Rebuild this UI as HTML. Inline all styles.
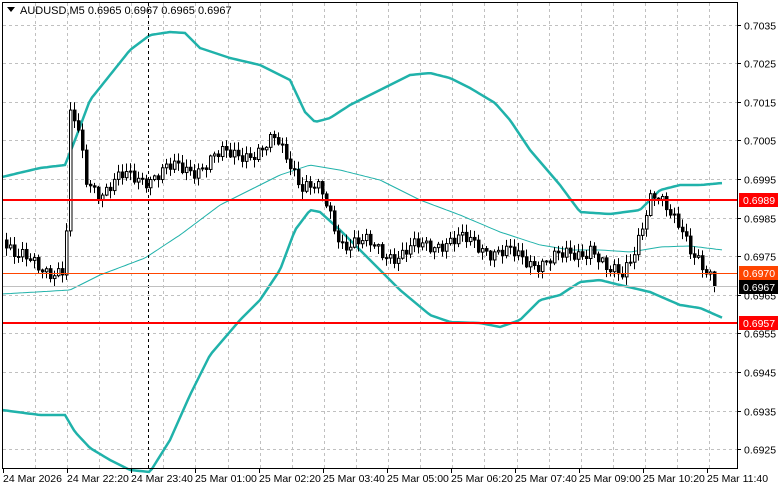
<!DOCTYPE html><html><head><meta charset="utf-8"><style>
html,body{margin:0;padding:0;background:#fff;width:781px;height:489px;overflow:hidden}
svg{display:block;font-family:"Liberation Sans",sans-serif}
</style></head><body>
<svg id="s" width="781" height="489" xmlns="http://www.w3.org/2000/svg">
<rect width="781" height="489" fill="#fff"/>
<g id="grid" stroke="#c0c0c0" stroke-dasharray="3,3" stroke-width="1"></g>
<g id="bands" fill="none" stroke="#20b2aa"></g>
<g id="candles"></g>
<line x1="148.5" y1="3" x2="148.5" y2="468" stroke="#000" stroke-dasharray="3,3"/>
<line x1="2" y1="200" x2="737" y2="200" stroke="#ff0000" stroke-width="2"/>
<line x1="2" y1="273.5" x2="737" y2="273.5" stroke="#ff4500" stroke-width="1"/>
<line x1="2" y1="323" x2="737" y2="323" stroke="#ff0000" stroke-width="2"/>
<line x1="2" y1="286.5" x2="737" y2="286.5" stroke="#c0c0c0" stroke-width="1"/>
<rect x="2.5" y="2.5" width="735" height="466" fill="none" stroke="#000"/>
<g id="axis" font-size="10.5" fill="#000"></g>
<polygon points="7,7 15,7 11,12" fill="#000"/>
<text x="20" y="14" font-size="11" fill="#000">AUDUSD,M5  0.6965 0.6967 0.6965 0.6967</text>
<rect x="739" y="193" width="39" height="14" fill="#ff0000"/><text x="743" y="204" font-size="10.5" fill="#fff">0.6989</text>
<rect x="739" y="266" width="39" height="14" fill="#ff4500"/><text x="743" y="277" font-size="10.5" fill="#fff">0.6970</text>
<rect x="739" y="280" width="39" height="14" fill="#000"/><text x="743" y="291" font-size="10.5" fill="#fff">0.6967</text>
<rect x="739" y="316" width="39" height="14" fill="#ff0000"/><text x="743" y="327" font-size="10.5" fill="#fff">0.6957</text>
</svg>
<script>
(function(){
var NS="http://www.w3.org/2000/svg";
function el(p,t,a,txt){var e=document.createElementNS(NS,t);for(var k in a)e.setAttribute(k,a[k]);if(txt)e.textContent=txt;document.getElementById(p).appendChild(e);return e;}
var prices=["0.7035","0.7025","0.7015","0.7005","0.6995","0.6985","0.6975","0.6965","0.6955","0.6945","0.6935","0.6925"];
for(var i=0;i<12;i++){var y=24.5+i*38.6;y=Math.round(y)+0.5;
 el("grid","line",{x1:3,y1:y,x2:737,y2:y});
 el("axis","line",{x1:737,y1:y,x2:741,y2:y,stroke:"#000"});
 el("axis","text",{x:744,y:y+4},prices[i]);}
for(var x=35;x<737;x+=32.1){var xx=Math.round(x)+0.5;el("grid","line",{x1:xx,y1:3,x2:xx,y2:468});}
var tl=["24 Mar 2026","24 Mar 22:20","24 Mar 23:40","25 Mar 01:00","25 Mar 02:20","25 Mar 03:40","25 Mar 05:00","25 Mar 06:20","25 Mar 07:40","25 Mar 09:00","25 Mar 10:20","25 Mar 11:40"];
for(var i=0;i<12;i++){var x=3+i*64;el("axis","line",{x1:x+0.5,y1:468,x2:x+0.5,y2:473,stroke:"#000"});el("axis","text",{x:x,y:482},tl[i]);}
function interp(pts,x){for(var i=0;i<pts.length-1;i++){if(x>=pts[i][0]&&x<=pts[i+1][0]){var t=(x-pts[i][0])/(pts[i+1][0]-pts[i][0]);return pts[i][1]+t*(pts[i+1][1]-pts[i][1]);}}return pts[pts.length-1][1];}
function poly(pts,w){var s="";for(var x=2;x<=723;x+=3){s+=x+","+interp(pts,x).toFixed(1)+" ";}el("bands","polyline",{points:s,"stroke-width":w});}
var up=[[2,177],[40,168],[65,165],[75,140],[90,100],[110,75],[130,50],[150,35],[170,32],[185,33],[200,48],[230,58],[260,65],[290,80],[305,112],[315,122],[330,118],[350,105],[380,90],[410,75],[430,73],[450,78],[470,88],[495,103],[510,120],[530,150],[560,185],[580,212],[610,214],[640,210],[660,190],[680,185],[700,185],[723,183]];
var mid=[[2,294],[70,290],[100,275],[145,258],[180,235],[220,205],[260,185],[280,175],[310,165],[340,170],[380,180],[420,200],[460,215],[500,232],[540,245],[570,250],[600,250],[630,252],[660,247],[690,246],[723,250]];
var lo=[[2,410],[40,415],[65,415],[75,432],[90,448],[110,460],[130,470],[150,472],[170,440],[190,395],[210,355],[240,320],[260,300],[280,270],[295,230],[310,210],[320,212],[340,230],[370,260],[400,290],[430,315],[450,322],[480,323],[500,327],[520,320],[540,300],[560,295],[580,282],[600,280],[620,285],[650,292],[680,305],[700,308],[723,318]];
poly(up,2.5);poly(mid,1);poly(lo,2.5);
var cl=[[5,240],[15,258],[30,265],[50,268],[64,272],[68,120],[75,125],[85,180],[100,190],[120,180],[150,175],[200,165],[240,150],[260,155],[275,140],[290,160],[300,185],[320,195],[340,240],[360,245],[400,255],[440,240],[480,245],[520,260],[560,260],[590,245],[605,275],[620,275],[635,240],[650,200],[665,210],[680,220],[690,250],[705,280],[715,287]];
var prev=240;
for(var x=5;x<=715;x+=4){var c=interp(cl,x)+Math.sin(x*1.7)*7+Math.sin(x*0.53)*5;if(x>=714)c=288;
 var o=prev;var tp=Math.min(o,c),bt=Math.max(o,c);if(bt-tp<1){bt=tp+1;}
 var hi=tp-1-Math.abs(Math.sin(x*2.3))*7,lw=bt+1+Math.abs(Math.cos(x*1.9))*7;
 el("candles","line",{x1:x+1.5,y1:hi,x2:x+1.5,y2:lw,stroke:"#000"});
 var bull=c<o;el("candles","rect",{x:x+0.5,y:tp,width:2.5,height:bt-tp,fill:bull?"#fff":"#000",stroke:"#000","stroke-width":1});
 prev=c;}
})();
</script>
</body></html>
